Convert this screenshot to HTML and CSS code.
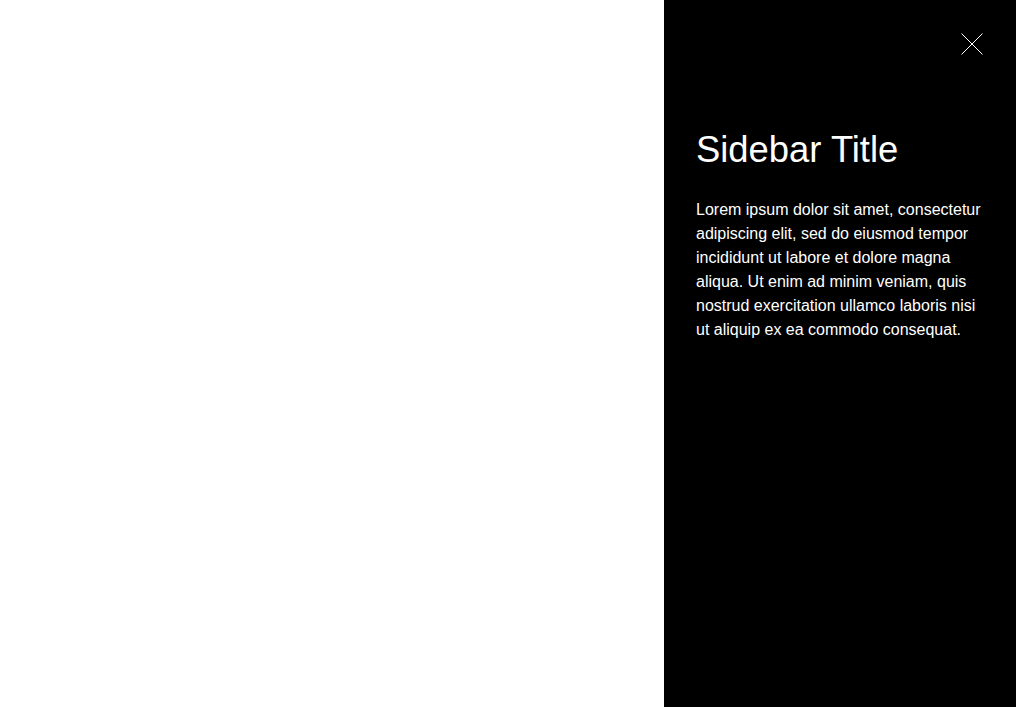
FILE: index.html
```html
<!DOCTYPE html>
<html lang="en">
<head>
<meta charset="utf-8">
<title>Sidebar</title>
<link rel="stylesheet" href="styles.css">
</head>
<body>
<div class="layout">
  <main class="main"></main>
  <aside class="sidebar">
    <div class="sidebar-header">
      <button class="close-btn" aria-label="Close">
        <svg width="22" height="22" viewBox="0 0 22 22" aria-hidden="true">
          <path d="M0.5 0.5 L21.5 21.5 M21.5 0.5 L0.5 21.5" stroke="#fff" stroke-width="1" fill="none"/>
        </svg>
      </button>
    </div>
    <h2 class="sidebar-title">Sidebar Title</h2>
    <p class="sidebar-text">Lorem ipsum dolor sit amet, consectetur adipiscing elit, sed do eiusmod tempor incididunt ut labore et dolore magna aliqua. Ut enim ad minim veniam, quis nostrud exercitation ullamco laboris nisi ut aliquip ex ea commodo consequat.</p>
  </aside>
</div>
</body>
</html>
```

FILE: styles.css
```css
* { box-sizing: border-box; }
html, body {
  margin: 0;
  padding: 0;
  height: 100%;
  font-family: "Liberation Sans", Arial, sans-serif;
}
.layout {
  display: flex;
  height: 100vh;
}
.main {
  flex: 1;
  background: #fff;
}
.sidebar {
  width: 352px;
  background: #000;
  color: #fff;
  padding: 33px 33px 32px 32px;
}
.sidebar-header {
  display: flex;
  justify-content: flex-end;
}
.close-btn {
  display: block;
  width: 22px;
  height: 22px;
  padding: 0;
  border: 0;
  background: none;
  cursor: pointer;
}
.close-btn svg { display: block; }
.sidebar-title {
  margin: 75px 0 0;
  font-size: 36.4px;
  line-height: 40px;
  font-weight: 400;
}
.sidebar-text {
  margin: 28px 0 0;
  font-size: 16px;
  line-height: 24px;
}
```
